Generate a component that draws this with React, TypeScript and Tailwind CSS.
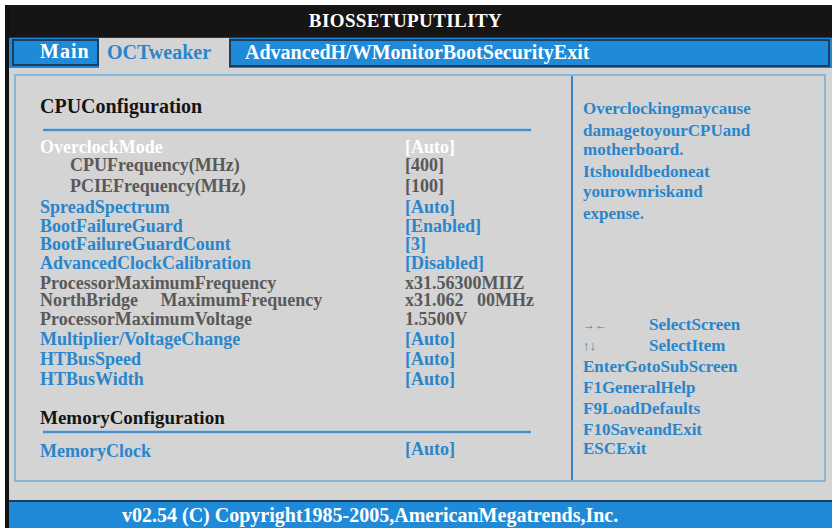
import React from 'react';

type Row = {
  label: string;
  value: string;
  tone: 'active' | 'grey' | 'blue';
  indent?: boolean;
  h: string;
};

// CPU configuration rows; h is the distance down to the next row
const cpuRows: Row[] = [
  { label: 'OverclockMode', value: '[Auto]', tone: 'active', h: 'h-[18px]' },
  { label: 'CPUFrequency(MHz)', value: '[400]', tone: 'grey', indent: true, h: 'h-[21px]' },
  { label: 'PCIEFrequency(MHz)', value: '[100]', tone: 'grey', indent: true, h: 'h-[21px]' },
  { label: 'SpreadSpectrum', value: '[Auto]', tone: 'blue', h: 'h-[19px]' },
  { label: 'BootFailureGuard', value: '[Enabled]', tone: 'blue', h: 'h-[18px]' },
  { label: 'BootFailureGuardCount', value: '[3]', tone: 'blue', h: 'h-[19px]' },
  { label: 'AdvancedClockCalibration', value: '[Disabled]', tone: 'blue', h: 'h-[20px]' },
  { label: 'ProcessorMaximumFrequency', value: 'x31.56300MIIZ', tone: 'grey', h: 'h-[17px]' },
  { label: 'NorthBridge\u00a0\u00a0\u00a0\u00a0\u00a0MaximumFrequency', value: 'x31.062\u00a0\u00a0\u00a000MHz', tone: 'grey', h: 'h-[19px]' },
  { label: 'ProcessorMaximumVoltage', value: '1.5500V', tone: 'grey', h: 'h-[20px]' },
  { label: 'Multiplier/VoltageChange', value: '[Auto]', tone: 'blue', h: 'h-[20px]' },
  { label: 'HTBusSpeed', value: '[Auto]', tone: 'blue', h: 'h-[20px]' },
  { label: 'HTBusWidth', value: '[Auto]', tone: 'blue', h: 'h-[20px]' },
];

const toneClass = {
  active: 'text-white',
  grey: 'text-[#595959]',
  blue: 'text-[#2a86cc]',
};

const Divider = () => (
  <div className="ml-[3px] w-[488px] h-[4px] bg-[#4d8fc4] border-y border-[#a8cce6]" />
);

const SettingRow: React.FC<{ row: Row }> = ({ row }) => (
  <div className={`flex items-start leading-[17px] ${row.h} ${toneClass[row.tone]}`}>
    <div className={`w-[365px] ${row.indent ? 'pl-[30px]' : ''}`}>{row.label}</div>
    <div>{row.value}</div>
  </div>
);

export default function App() {
  return (
    <div className="w-[840px] h-[532px] bg-white pt-[5px] pl-[5px] font-['Liberation_Serif',serif] font-bold">
      <div className="w-[827px] h-[523px] border-l-4 border-[#111] bg-[#d4d4d4] flex flex-col">
        {/* title bar */}
        <div className="h-[32px] bg-[#161414] flex items-center justify-center text-white text-[19px] tracking-[0.4px] pr-[30px]">
          BIOSSETUPUTILITY
        </div>

        {/* tab strip */}
        <div className="h-[31px] bg-[#1f8ad8] border-t border-[#1d3d5c] flex items-stretch">
          <div className="ml-[3px] mt-[1px] mb-[2px] w-[87px] bg-[#1f8ad8] border-2 border-[#1b3c5e] flex items-center pl-[26px] pb-[3px] text-white text-[20px] tracking-[1px]">
            Main
          </div>
          <div className="w-[130px] bg-[#d4d4d4] flex items-center pl-[8px] pb-[2px] text-[#2a86cc] text-[20px]">
            OCTweaker
          </div>
          <div className="flex-1 mt-[1px] mb-[1px] mr-[2px] bg-[#1f8ad8] border-2 border-[#1b3c5e] flex items-center pl-[14px] pb-[2px] text-white text-[20px]">
            AdvancedH/WMonitorBootSecurityExit
          </div>
        </div>

        {/* main area */}
        <div className="flex-1 pt-[6px] pl-[5px]">
          <div className="w-[812px] h-[408px] border-2 border-[#86b6d8] flex">
            {/* settings */}
            <div className="w-[555px] pl-[24px] pt-[18px] text-[18px]">
              <div className="h-[24px] flex items-center text-[20px] text-[#141414]">CPUConfiguration</div>
              <div className="h-[10px]" />
              <Divider />
              <div className="h-[7px]" />
              {cpuRows.map((r) => (
                <SettingRow key={r.label} row={r} />
              ))}
              <div className="h-[15px]" />
              <div className="h-[24px] flex items-center text-[19px] text-[#141414]">MemoryConfiguration</div>
              <Divider />
              <div className="h-[9px]" />
              <div className="flex items-start h-[20px] leading-[17px] text-[#2a86cc]">
                <div className="w-[365px]">MemoryClock</div>
                <div className="-mt-[2px]">[Auto]</div>
              </div>
            </div>

            {/* help column */}
            <div className="flex-1 border-l-2 border-[#3d84c4] pl-[10px] pt-[24px] text-[17px] text-[#2a86cc] leading-none flex flex-col">
              <div className="h-[22px]">Overclockingmaycause</div>
              <div className="h-[19px]">damagetoyourCPUand</div>
              <div className="h-[22px]">motherboard.</div>
              <div className="h-[20px]">Itshouldbedoneat</div>
              <div className="h-[22px]">yourownriskand</div>
              <div className="h-[20px]">expense.</div>

              <div className="h-[89px]" />
              <div className="h-[21px] flex items-center">
                <span className="w-[66px] text-[12px] text-[#4a7fb0]">→←</span>
                <span>SelectScreen</span>
              </div>
              <div className="h-[20px] flex items-center">
                <span className="w-[66px] text-[13px] text-[#4a7fb0]">↑↓</span>
                <span>SelectItem</span>
              </div>
              <div className="h-[23px] flex items-center">EnterGotoSubScreen</div>
              <div className="h-[19px] flex items-center">F1GeneralHelp</div>
              <div className="h-[23px] flex items-center">F9LoadDefaults</div>
              <div className="h-[18px] flex items-center">F10SaveandExit</div>
              <div className="h-[20px] flex items-center">ESCExit</div>
            </div>
          </div>
        </div>

        {/* footer */}
        <div className="h-[28px] bg-[#1f8ad8] border-t-2 border-[#1d3d5c] flex items-center pl-[113px] text-white text-[20px] leading-none">
          v02.54 (C) Copyright1985-2005,AmericanMegatrends,Inc.
        </div>
      </div>
    </div>
  );
}
